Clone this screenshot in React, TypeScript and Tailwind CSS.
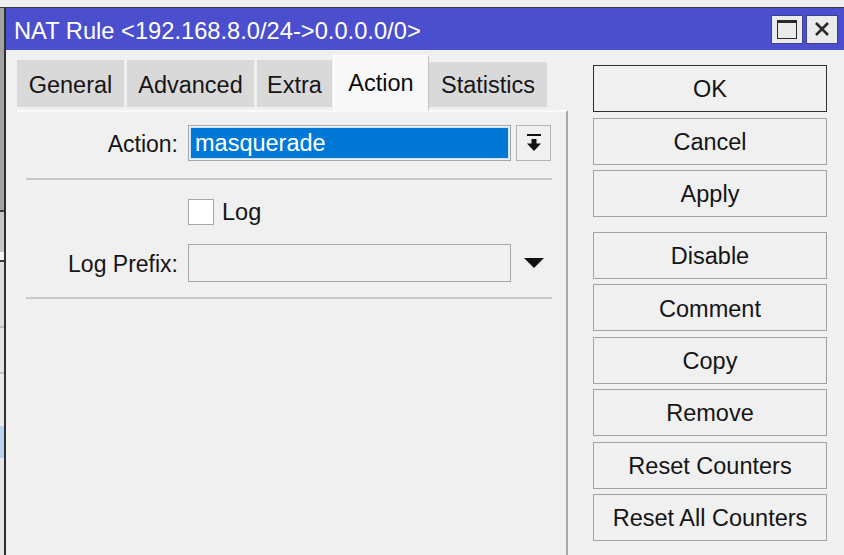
import React from 'react';

const topButtons = ['Cancel', 'Apply'];
const lowerButtons = ['Disable', 'Comment', 'Copy', 'Remove', 'Reset Counters', 'Reset All Counters'];

const DialogButton: React.FC<{ label: string; primary?: boolean }> = ({ label, primary }) => (
  <button
    className={`h-[47px] w-full bg-[#f0f0f0] pt-[3px] text-[23.5px] leading-none text-[#151515] ${
      primary ? 'border-[1.5px] border-[#2f2f2f]' : 'border-[1.5px] border-[#a3a3a3]'
    }`}
  >
    {label}
  </button>
);

const App: React.FC = () => {
  return (
    <div className="w-[844px] h-[555px] overflow-hidden bg-[#f0f0f0] flex flex-col font-['Liberation_Sans',Arial,sans-serif] text-[#151515]">
      {/* desktop strip above the window */}
      <div className="h-[8px] shrink-0 bg-[#efefef] border-b border-[#3c3c3c]" />

      <div className="flex flex-1 min-h-0">
        {/* bit of the window behind */}
        <div className="w-[6px] shrink-0 flex flex-col border-r-2 border-[#2e2e2e]">
          <div className="h-[202px] bg-[#a3a3a3]" />
          <div className="h-[2px] bg-[#3a3a3a]" />
          <div className="h-[40px] bg-[#c6c6c6]" />
          <div className="h-[8px] bg-[#f2f2f2]" />
          <div className="h-[2px] bg-[#3a3a3a]" />
          <div className="h-[64px] bg-[#dcdcdc]" />
          <div className="h-[2px] bg-[#bdbdbd]" />
          <div className="h-[44px] bg-[#e4e4e4]" />
          <div className="h-[2px] bg-[#c4c4c4]" />
          <div className="h-[52px] bg-[#e8e8e8]" />
          <div className="h-[32px] bg-[#b9d3ee]" />
          <div className="flex-1 bg-[#e6e6e6]" />
        </div>

        <div className="flex-1 flex flex-col min-w-0">
          {/* title bar */}
          <div className="h-[42px] shrink-0 bg-[#4b4fcd] flex items-center pl-[8px] pr-[6px]">
            <span className="pt-[5px] text-white text-[23.7px] leading-none whitespace-nowrap">
              NAT Rule &lt;192.168.8.0/24-&gt;0.0.0.0/0&gt;
            </span>
            <div className="ml-auto flex gap-[3px]">
              <div className="w-[32px] h-[29px] bg-[#ebebeb] border border-[#3b3f8f] flex items-center justify-center">
                <div className="w-[20px] h-[19px] border-[1.5px] border-t-[3px] border-[#2a2a2a]" />
              </div>
              <div className="w-[32px] h-[29px] bg-[#ebebeb] border border-[#3b3f8f] flex items-center justify-center">
                <svg width="16" height="16" viewBox="0 0 16 16">
                  <path d="M2 2L14 14M14 2L2 14" stroke="#2a2a2a" strokeWidth="2.6" />
                </svg>
              </div>
            </div>
          </div>

          <div className="flex flex-1 min-h-0 pl-[11px]">
            {/* tabs + panel */}
            <div className="w-[551px] shrink-0 flex flex-col pt-[5px]">
              <div className="h-[55px] flex items-end">
                <div className="w-[107px] h-[47px] mb-[3px] pt-[4px] bg-[#d9d9d9] flex items-center justify-center text-[23.5px]">General</div>
                <div className="w-[127px] h-[47px] mb-[3px] ml-[3px] pt-[4px] bg-[#d9d9d9] flex items-center justify-center text-[23.5px]">Advanced</div>
                <div className="w-[75px] h-[47px] mb-[3px] ml-[3px] pt-[4px] bg-[#d9d9d9] flex items-center justify-center text-[23.5px]">Extra</div>
                <div className="w-[96px] h-[55px] ml-[1px] bg-[#f8f8f8] border-t border-l border-white border-r border-r-[#c4c4c4] flex items-start justify-center pt-[10px] text-[23.5px] text-[#0d0d0d]">Action</div>
                <div className="w-[118px] h-[45px] mb-[3px] pt-[3px] bg-[#d9d9d9] flex items-center justify-center text-[23.5px]">Statistics</div>
              </div>

              <div className="flex-1 flex flex-col bg-[#f0f0f0] border-t-2 border-[#fafafa] border-r-2 border-r-[#a8a8a8]">
                {/* Action */}
                <div className="mt-[13px] flex items-center h-[36px]">
                  <div className="w-[161px] pt-[3px] text-right text-[23px]">Action:</div>
                  <div className="ml-[10px] w-[323px] h-[36px] border border-[#a6a6a6] p-[1px]">
                    <div className="h-full bg-[#0078d7] border border-[#cfe3f5] flex items-center pl-[4px] pt-[2px] text-white text-[23.5px]">
                      masquerade
                    </div>
                  </div>
                  <div className="ml-[5px] w-[35px] h-[36px] border border-[#b4b4b4] bg-[#f0f0f0] flex items-center justify-center">
                    <svg width="16" height="20" viewBox="0 0 16 20">
                      <rect x="1" y="1" width="14" height="2" fill="#111" />
                      <rect x="5.5" y="6" width="5" height="5" fill="#111" />
                      <path d="M1 10.5H15L8 18Z" fill="#111" />
                    </svg>
                  </div>
                </div>

                <div className="mt-[17px] ml-[9px] w-[526px] h-[2px] bg-[#c9c9c9]" />

                {/* Log */}
                <div className="mt-[19px] flex items-center h-[26px]">
                  <div className="ml-[171px] w-[26px] h-[26px] bg-white border border-[#a8a8a8]" />
                  <span className="ml-[8px] pt-[2px] text-[23.5px]">Log</span>
                </div>

                {/* Log Prefix */}
                <div className="mt-[19px] flex items-center h-[38px]">
                  <div className="w-[161px] pt-[2px] text-right text-[23px]">Log Prefix:</div>
                  <div className="ml-[10px] w-[323px] h-[38px] border border-[#a6a6a6] bg-[#f0f0f0]" />
                  <div className="ml-[5px] w-[35px] flex items-center justify-center">
                    <svg width="20" height="10" viewBox="0 0 20 10">
                      <path d="M0 0H20L10 10Z" fill="#111" />
                    </svg>
                  </div>
                </div>

                <div className="mt-[15px] ml-[9px] w-[526px] h-[2px] bg-[#c9c9c9]" />
              </div>
            </div>

            {/* buttons */}
            <div className="ml-[25px] w-[234px] shrink-0 flex flex-col pt-[15px]">
              <DialogButton label="OK" primary />
              <div className="mt-[6px] flex flex-col gap-[5px]">
                {topButtons.map(b => (
                  <DialogButton key={b} label={b} />
                ))}
              </div>
              <div className="mt-[15px] flex flex-col gap-[5.4px]">
                {lowerButtons.map(b => (
                  <DialogButton key={b} label={b} />
                ))}
              </div>
            </div>
          </div>
        </div>
      </div>
    </div>
  );
};

export default App;
